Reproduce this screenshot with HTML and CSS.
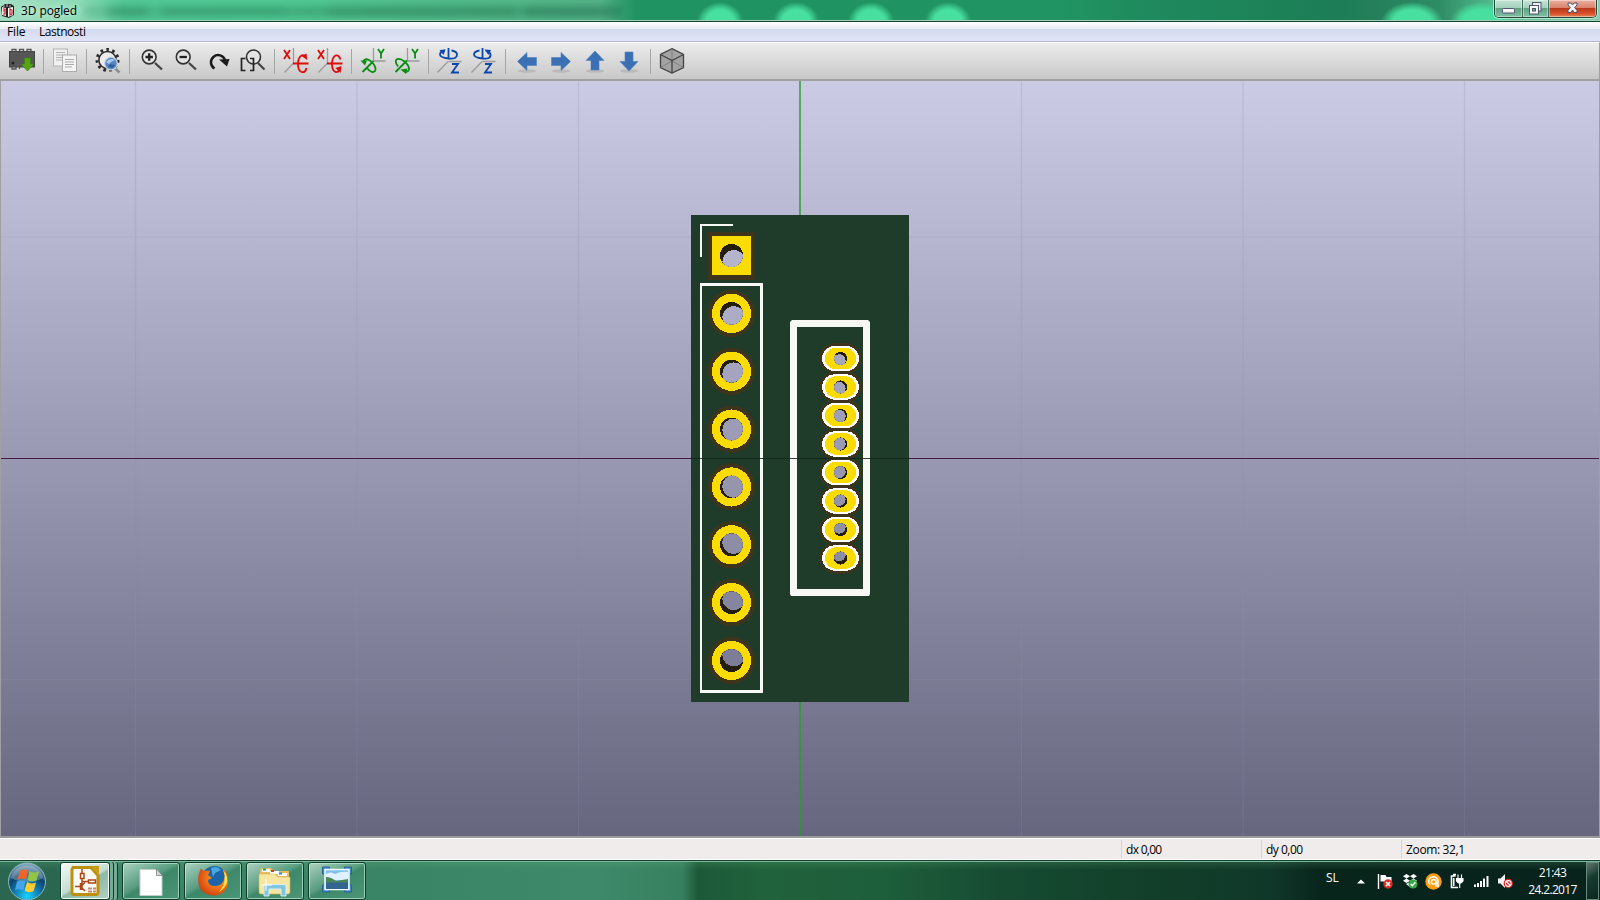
FILE: index.html
```html
<!DOCTYPE html>
<html lang="sl">
<head>
<meta charset="utf-8">
<title>3D pogled</title>
<link rel="stylesheet" href="styles.css">
</head>
<body>
<div class="window">
  <header class="titlebar">
    <div class="glow-row" aria-hidden="true"><i class="spot s1"></i><i class="spot s2"></i><i class="spot s3"></i><i class="spot s4"></i><i class="spot wide s5"></i><i class="spot wide s6"></i><i class="smear"></i></div>
    <svg class="app-icon" width="16" height="16" viewBox="0 0 16 16"><path d="M1 4 L5 1 L11 1 L14 3 V12 L9 15 L2 13Z" fill="#222"/><path d="M2 4l4 1v8l-4-1z" fill="#f4dede"/><path d="M8 5l5-1v8l-5 2z" fill="#fff"/><path d="M3 6h2v2h-2h2v3h-2M10 6l2 1v4l-2 1z" fill="none" stroke="#c8202a" stroke-width="1.2"/><path d="M4 2v2M7 1v3M10 2v2" stroke="#bbb"/></svg>
    <h1 class="title">3D pogled</h1>
    <div class="controls">
      <button class="ctl"><svg width="13" height="6" viewBox="0 0 13 6"><rect x=".5" y=".5" width="12" height="4.5" rx="1" fill="#f5f5f5" stroke="#50566b"/></svg></button>
      <button class="ctl"><svg width="13" height="13" viewBox="0 0 13 13"><rect x="3.5" y=".5" width="8.500" height="8.500" fill="#eee" stroke="#50566b"/><rect x=".5" y="3.500" width="9" height="8.500" fill="#f8f8f8" stroke="#50566b"/><rect x="3.500" y="6.500" width="3" height="2.500" fill="#74a993" stroke="#50566b"/></svg></button>
      <button class="ctl close"><svg width="13" height="12" viewBox="0 0 13 12"><path d="M2 1h3l1.500 2L8 1h3v2L8.700 5.500 11 8.500v2H8L6.500 8 5 10.500H2v-2l2.300-3L2 3z" fill="#f6f6f6" stroke="#54506a"/></svg></button>
    </div>
  </header>
  <nav class="menubar"><span class="menu-file">File</span><span class="menu-prefs">Lastnosti</span></nav>
  <div class="toolbar">
    <svg class="tool" viewBox="0 0 26 26"><path d="M3 4.500v-3h4v3M10.500 4.500v-3h4v3M18 4.500v-3h4v3M3 18v3h4v-3M10.500 18v3" fill="none" stroke="#555" stroke-width="1.300"/><rect x=".5" y="3.500" width="25" height="15.500" fill="#565656" stroke="#444"/><circle cx="4" cy="15" r="1.500" fill="#222"/><path d="M15.500 10h6v6h3.500l-6.500 7-6.500-7h3.500z" fill="#55a514" stroke="#397f0c" stroke-width=".7"/></svg>
    <i class="sep"></i>
    <svg class="tool" viewBox="0 0 26 26"><rect x="1.500" y="1" width="14" height="17" fill="#f0f0f0" stroke="#b4b4b4"/><path d="M4 4.500h9M4 7h9M4 9.500h8M4 12h7" stroke="#b4b4b4"/><rect x="10.500" y="7" width="14" height="16.500" fill="#f4f4f4" stroke="#acacac"/><path d="M13 11.500h9M13 14h9M13 16.500h9M13 19h7" stroke="#aaa"/></svg>
    <i class="sep"></i>
    <svg class="tool" viewBox="0 0 26 26"><circle cx="12.500" cy="12" r="10.500" fill="none" stroke="#2b2b2b" stroke-width="3" stroke-dasharray="2.600 3.400"/><circle cx="12.500" cy="12" r="8.600" fill="#ececec" stroke="#2b2b2b" stroke-width="1.500"/><path d="M19.500 20l5 4.500" stroke="#8d8d8d" stroke-width="2.600"/><circle cx="16" cy="15.500" r="6.300" fill="#5486c6" stroke="#cdd4df" stroke-width="1.200"/><path d="M11 14q4-5 9-2l-4 2-2 2z" fill="#a9cbf0"/><path d="M13 19l2-3 5 1-2 3z" fill="#2f5f9b"/></svg>
    <i class="sep"></i>
    <svg class="tool" viewBox="0 0 26 26"><path d="M17 15l7 6.500" stroke="#444" stroke-width="2.300"/><circle cx="11.200" cy="9" r="6.900" fill="#e4e4e4" stroke="#333" stroke-width="1.600"/><path d="M7.500 9h7.400M11.200 5.300v7.400" stroke="#222" stroke-width="2.300"/></svg>
    <svg class="tool" viewBox="0 0 26 26"><path d="M17 15l7 6.500" stroke="#444" stroke-width="2.300"/><circle cx="11.200" cy="9" r="6.900" fill="#e4e4e4" stroke="#333" stroke-width="1.600"/><path d="M7.500 9h7.400" stroke="#222" stroke-width="2.300"/></svg>
    <svg class="tool" viewBox="0 0 26 26"><path d="M8.500 20.500A7.200 7.200 0 1 1 19 12" fill="none" stroke="#1c1c1c" stroke-width="2.500"/><path d="M13 11.500l10.500-.5-2.500 7.500z" fill="#1c1c1c"/></svg>
    <svg class="tool" viewBox="0 0 26 26"><path d="M18 15l6.500 6.500" stroke="#444" stroke-width="2.200"/><circle cx="13.500" cy="9" r="7" fill="#e4e4e4" stroke="#333" stroke-width="1.600"/><path d="M5.500 10.500h-4v12h4M10 10.500h3.500v12H10" fill="none" stroke="#222" stroke-width="1.700"/></svg>
    <i class="sep"></i>
    <svg class="tool axis-x" viewBox="0 0 26 26"><path class="guide" d="M10.500 0v15.500M10.500 15L1.500 24.500"/><path d="M1 2l6 9M7 2L1 11M10 15.500h15.500M22.500 9Q20.500 6.500 18.500 7.500 15 9.500 15 16t3.500 8q4 1 5-4"/><path class="head" d="M18.500 8l5-2.500.7 6.500z"/></svg>
    <svg class="tool axis-x" viewBox="0 0 26 26"><path class="guide" d="M10.500 0v15.500M10.500 15L1.500 24.500"/><path d="M1 2l6 9M7 2L1 11M10 15.500h15.500M23.500 11.500q-1.500-5-5-4Q15 9.500 15 16t3.500 8q2.500.5 4-2"/><path class="head" d="M18.500 20l6-2-1 7z"/></svg>
    <i class="sep"></i>
    <svg class="tool axis-y" viewBox="0 0 26 26"><path class="guide" d="M13.500 0v13M13 13h12.500"/><path d="M18 1l3 4.500L24 1M21 5.500v5M2.500 24L13.500 13M3.500 13.500q1-3.500 5.500-1.500 5 3 6.500 8 .5 4.500-3.500 4-3-1-5-4"/><path class="head" d="M.5 12.500l6.500 0-2 5z"/></svg>
    <svg class="tool axis-y" viewBox="0 0 26 26"><path class="guide" d="M13.500 0v13M13 13h12.500"/><path d="M18 1l3 4.500L24 1M21 5.500v5M1.500 24L13 12.500M4 18.500Q.5 14 2.500 11.500q3-2 8 2 5 4.500 4.500 8-1 3-4 2"/><path class="head" d="M6.500 21.500l7-1-1.500 5.500z"/></svg>
    <i class="sep"></i>
    <svg class="tool axis-z" viewBox="0 0 26 26"><path class="guide" d="M11.500 13.500h13M11 13.500L.5 24.500"/><path d="M11.500 0v10.500M15 16h6l-6 8.500h7M8 2.500Q3 3.500 3 6.500t8.500 4 8.500-4Q20 3.500 14.500 2.500"/><path class="head" d="M2.500 2l6 -.5-2 5.500z"/></svg>
    <svg class="tool axis-z" viewBox="0 0 26 26"><path class="guide" d="M11.500 13.500h13M11 13.500L.5 24.500"/><path d="M11.500 0v10.500M14 16h6l-6 8.500h7M8.500 2.500Q3 3.500 3 6.500t8.500 4 8-4Q19 3.500 15 2.500"/><path class="head" d="M13.500 1.500l6.500.5-2.500 5z"/></svg>
    <i class="sep"></i>
    <svg class="tool arrow" viewBox="0 0 26 26"><ellipse cx="13" cy="23" rx="9" ry="1.800"/><path d="M3.500 13.500l9.500-9v5h9.500v8H13v5z"/></svg>
    <svg class="tool arrow" viewBox="0 0 26 26"><ellipse cx="13" cy="23" rx="9" ry="1.800"/><path d="M22.500 13.500l-9.500-9v5H3.500v8H13v5z"/></svg>
    <svg class="tool arrow" viewBox="0 0 26 26"><ellipse cx="13" cy="23" rx="9" ry="1.800"/><path d="M13 3l9 9.500h-5v9.500H9v-9.500H4z"/></svg>
    <svg class="tool arrow" viewBox="0 0 26 26"><ellipse cx="13" cy="23" rx="9" ry="1.800"/><path d="M13 23l9-9.500h-5V4H9v9.500H4z"/></svg>
    <i class="sep"></i>
    <svg class="tool" viewBox="0 0 26 26"><path d="M13 .7l11.500 5.800v13L13 25 1.500 19.500v-13z" fill="#a3a3a3" stroke="#444" stroke-width="1.300"/><path d="M13 .7V13M1.500 19.500L13 13l11.500 6.500" fill="none" stroke="#777" stroke-width=".8"/><path d="M1.500 6.500L13 12.500l11.500-6M13 12.500V25" fill="none" stroke="#444" stroke-width="1.300"/></svg>
  </div>
  <main class="viewport">
    <svg id="scene" class="scene" width="1598" height="755" viewBox="1 81 1598 755">
      <g class="grid"><path d="M135.500 81v755M357 81v755M578.500 81v755M1021.500 81v755M1243 81v755M1464.500 81v755M1 237h1598M1 679.500h1598"/></g>
      <path d="M800 81v755" stroke="#22a022" stroke-opacity=".72" stroke-width="2"/>
      <rect x="691" y="215" width="218" height="487" fill="#1f3b2a"/>
      <path d="M701 257V225h32" fill="none" stroke="#f8f9f5" stroke-width="2"/>
      <path d="M700 283h63v410h-63zM702 286v404h58V286z" fill="#f8f9f5" fill-rule="evenodd"/>
      <path d="M792 320h76l2 2v272l-1 2h-78l-1-2V322zM797 327v262h66V327z" fill="#f8f9f5" fill-rule="evenodd"/>
      <g id="pads" shape-rendering="crispEdges"></g>
      <path d="M1 458.500h690M909 458.500h690" stroke="#421a45"/>
      <path d="M691 458.500h218" stroke="#12261a" stroke-opacity=".85"/>
    </svg>
  </main>
  <footer class="statusbar"><span class="pane main-pane"></span><span class="pane dx">dx 0,00</span><span class="pane dy">dy 0,00</span><span class="pane last">Zoom: 32,1</span></footer>
</div>
<div class="taskbar">
  <svg class="orb" width="40" height="40" viewBox="0 0 40 40"><defs><radialGradient id="o" cx=".5" cy=".9" r=".9"><stop offset="0" stop-color="#19d5ff"/><stop offset=".35" stop-color="#1180b8"/><stop offset=".65" stop-color="#0c426c"/><stop offset="1" stop-color="#8fb4c2"/></radialGradient></defs><circle cx="20" cy="19.500" r="18.500" fill="url(#o)" stroke="#8bb9b6" stroke-width="1"/><path d="M4 16a16.500 16.500 0 0 1 32 0q-16 8-32 0z" fill="#fff" opacity=".25"/><path d="M13 9q4-2.500 8-.5l-2 9q-4-2-8.500 0z" fill="#f0642a"/><path d="M22.500 9q4 2.500 9.500.5l-2.500 9q-4.500 2-9-.5z" fill="#8fc648"/><path d="M10 19.500q4.500-2 8.500 0l-2.300 9q-4-2-8.200-.5z" fill="#45a5ea"/><path d="M20 20q4 2.500 9 .5L26.700 29q-4.500 2.500-9 -.2z" fill="#fecb31"/></svg>
  <div class="task-stack"><div class="task active"><svg width="32" height="32" viewBox="0 0 32 32"><path d="M4 2.500h18l7 8v17q0 2-2 2H5q-2 0-2-2V4.500z" fill="#fffdf8" stroke="#bd910d" stroke-width="3"/><path d="M22 1h8v8z" fill="#c69b12"/><path d="M13 4v4M13 14v11M11.500 8.500h3.500v5h-3.500zM13 16.500h6M19.500 15h7v3h-7zM6 21.500h5M11.500 18v7M12 21l4-3.500M12 22l4 4" fill="none" stroke="#ae4514" stroke-width="1.500"/><path d="M19 23.500h8M19 26.500h8" stroke="#c5896d" stroke-width="1.800" stroke-dasharray="4 1"/></svg></div><i></i><i></i></div>
  <div class="task"><svg width="32" height="32" viewBox="0 0 32 32"><path d="M5 4.500h17l5 6v20H5z" fill="#fff" stroke="#c6ccc9"/><path d="M21.500 4v6.500h6z" fill="#d2d6d4" stroke="#6a716d" stroke-width=".7"/></svg></div>
  <div class="task"><svg width="32" height="32" viewBox="0 0 32 32"><defs><radialGradient id="fox" cx=".65" cy=".35" r=".8"><stop offset="0" stop-color="#ffb61a"/><stop offset=".5" stop-color="#ef6e17"/><stop offset="1" stop-color="#c3350e"/></radialGradient></defs><circle cx="17.500" cy="14" r="13" fill="#1d65a8"/><path d="M14 3q6-3 10 2l-6 3-2 4z" fill="#4aa8dd"/><path d="M2.500 7L4 3.500 7 6q3-1 6 0l-2 4 4 3-4 2q0 6 7 6 8 0 10-9 0-5-3-9 6 4 6 12 0 15-14.500 15.500Q1 29 1.200 15 1 10 2.500 7z" fill="url(#fox)"/><path d="M26 5q6 7 3.500 14-3 6-8 8 6-6 6-12 1-5-1.500-10z" fill="#ffe248"/></svg></div>
  <div class="task"><svg width="34" height="32" viewBox="0 0 34 32"><path d="M2 6q0-3 2-3h9l3 3h15v23H2z" fill="#e5bc5e"/><path d="M4 4h8v3H4zM12 6h9v3h-9zM20 8h9v3h-9z" fill="#fff"/><path d="M5 3.500h3v2H5z" fill="#18a837"/><path d="M13 5h3v2h-3z" fill="#e3371f"/><path d="M21 7.500h3v2h-3z" fill="#278fd5"/><path d="M1 9h16l3 3h12v15q0 2-2 2H3q-2 0-2-2z" fill="#f7e6a0" stroke="#d8b45b" stroke-width=".6"/><path d="M6 31V21q0-1.500 2-1.500h18q2 0 2 1.500v10h-5v-7H11v7z" fill="#83c4de" stroke="#d4f0f7"/><path d="M8 14v12M3 20h11" stroke="#fff"/></svg></div>
  <div class="task"><svg width="32" height="32" viewBox="0 0 32 32"><path d="M1.500 2h7v7h-7zM23.500 2h7v7h-7zM1.500 20h7v7h-7zM23.500 20h7v7h-7z" fill="#4488ca" stroke="#276399"/><rect x="4" y="4.500" width="24" height="20" fill="#7fc0f0" stroke="#f5fbff" stroke-width="1.500"/><path d="M5 9q5-3 9 0 6-3 13-2v8H5z" fill="#e0f2ff"/><path d="M5 12q5 0 10 4 6-1 12-2v4H5z" fill="#4a8559"/><path d="M5 17.500h22V24H5z" fill="#326590"/></svg></div>
  <div class="tray">
    <span class="lang">SL</span>
    <svg class="t-up" width="8" height="5" viewBox="0 0 8 5"><path d="M0 4.500L4 .5l4 4z" fill="#fff"/></svg>
    <svg class="t-flag" width="16" height="16" viewBox="0 0 16 16"><path d="M1.500 1v15" stroke="#fff" stroke-width="1.400"/><path d="M3.500 2h5l1 2h5v6H8L7 8.500H3.500z" fill="#fff"/><circle cx="11" cy="11" r="4.700" fill="#db2b27"/><path d="M9 9l4 4M13 9l-4 4" stroke="#fff" stroke-width="1.600"/></svg>
    <svg class="t-drop" width="16" height="16" viewBox="0 0 16 16"><path d="M4.500 1L8 3.300 4.500 5.500 1 3.300zM11.500 1L15 3.300l-3.500 2.200L8 3.300zM4.500 5.500L8 7.800 4.500 10 1 7.800zM11.500 5.500L15 7.800 11.500 10 8 7.800zM4 11l4-2 4 2-4 3z" fill="#fff"/><circle cx="11" cy="11" r="4.500" fill="#3aa747"/><path d="M8.700 11l1.700 1.800 3-3.600" fill="none" stroke="#fff" stroke-width="1.400"/></svg>
    <svg class="t-avast" width="17" height="17" viewBox="0 0 17 17"><circle cx="8.500" cy="8.500" r="8.200" fill="#ff9e12"/><path d="M5.300 12A4.700 4.700 0 1 1 13 8.500V13h-2V8.500" fill="none" stroke="#fff" stroke-width="1.500"/><circle cx="8.700" cy="8.800" r="2.300" fill="none" stroke="#fff" stroke-width="1.400"/></svg>
    <svg class="t-batt" width="14" height="16" viewBox="0 0 14 16"><path d="M5.500 3H1.500v11.500H8M3 1.500h3" fill="none" stroke="#fff" stroke-width="1.600"/><path d="M3 5h1.500v8H3z" fill="#fff"/><path d="M8 1.500v4M11.500 1.500v4M6.500 5.500h6.500v2.500l-2 2H8.500l-2-2zM9.700 10v5" fill="#fff" stroke="#fff" stroke-width="1.100"/></svg>
    <svg class="t-sig" width="15" height="12" viewBox="0 0 15 12"><path d="M0 9.500h2V12H0zM3 8h2v4H3zM6 6h2v6H6zM9 3.500h2V12H9zM12.500 1h2v11h-2z" fill="#fff"/></svg>
    <svg class="t-vol" width="16" height="16" viewBox="0 0 16 16"><path d="M0 5.500h2.500L7 1v14l-4.500-4.500H0z" fill="#f3f3f3"/><circle cx="10.300" cy="10.500" r="4.700" fill="#d92424"/><circle cx="10.300" cy="10.500" r="2.900" fill="none" stroke="#fff" stroke-width="1.100"/><path d="M8.300 8.500l4 4" stroke="#fff" stroke-width="1.100"/></svg>
    <div class="clock"><span>21:43</span><span class="date">24.2.2017</span></div>
    <i class="show-desktop"></i>
  </div>
</div>
<script src="scene.js"></script>
</body>
</html>
```

FILE: styles.css
```css
* { box-sizing: border-box; }
body { margin: 0; width: 1600px; height: 900px; overflow: hidden; font-family: "Open Sans", "Noto Sans", sans-serif; font-size: 12px; color: #000; background: #f0eceb; }
.window { height: 860px; display: flex; flex-direction: column; }
.titlebar { position: relative; height: 22px; flex: none; display: flex; align-items: flex-start; overflow: hidden; border-bottom: 1px solid #12472f; box-shadow: inset 0 -1px #a3cdb9;
  background: linear-gradient(90deg, #a3dfc3 0, #8bdab5 80px, #52c896 125px, #4fc994 280px, #50be8c 400px, #53b287 600px, #209363 635px, #219463 1060px, #1f8a5d 1150px, #1c7d56 1340px, #24805a 1375px, #2f8c65 1440px, #4fb98c 1490px, #8ccdb1 1600px); }
.glow-row { position: absolute; inset: 0 0 1px 0; overflow: hidden; }
.spot { position: absolute; top: 2px; width: 46px; height: 40px; border-radius: 50%; background: radial-gradient(closest-side, #48e0a0 60%, rgba(72,224,160,.7) 74%, transparent); }
.wide { width: 62px; }
.s1 { left: 697px; } .s2 { left: 773px; } .s3 { left: 848px; } .s4 { left: 925px; } .s5 { left: 1381px; } .s6 { left: 1450px; }
.smear { position: absolute; left: 84px; top: 6px; width: 538px; height: 11px; filter: blur(3px); background: linear-gradient(90deg, rgba(20,90,60,.15) 0 20px, rgba(20,90,60,.32) 28px 60px, rgba(20,90,60,.15) 68px 74px, rgba(20,90,60,.3) 82px 196px, rgba(20,90,60,.24) 205px 240px, rgba(20,90,60,.34) 248px 428px, rgba(20,90,60,.2) 436px, rgba(20,90,60,.4) 444px 512px, rgba(20,90,60,.28) 538px); }
.app-icon { position: relative; margin: 3px 0 0; }
.title { position: relative; margin: 2px 0 0 5px; font-size: 12px; line-height: 17px; font-weight: 400; letter-spacing: -.1px; text-shadow: 0 0 6px #fff; }
.controls { position: relative; margin-left: auto; margin-right: 3px; display: flex; height: 18px; border: 1px solid #24453a; border-top: 0; border-radius: 0 0 5px 5px; box-shadow: 0 0 0 1px rgba(225,255,240,.6); overflow: hidden; }
.ctl { width: 26px; padding: 0; border: 0; border-right: 1px solid #3f6d5c; display: flex; align-items: center; justify-content: center; box-shadow: inset 0 0 0 1px rgba(255,255,255,.4); background: linear-gradient(#c4e4d6 0, #a2cfbb 45%, #62a184 50%, #80c0a4 100%); }
.ctl:first-child { padding-top: 4px; width: 28px; }
.ctl.close { width: 47px; padding-bottom: 1px; border-right: 0; background: linear-gradient(#eab0a0 0, #d98570 44%, #b93a1c 50%, #d9502a 80%, #e08858 100%); }
.menubar { height: 20px; flex: none; display: flex; padding: 0 7px; line-height: 20px; border-bottom: 1px solid #b0b6cd; background: linear-gradient(#fff 0, #e8ecf5 7px, #d5dbee 7px, #dfe4f6 100%); }
.menu-file { width: 32px; letter-spacing: -.15px; }
.menu-prefs { letter-spacing: -.45px; }
.toolbar { height: 39px; flex: none; display: flex; align-items: center; gap: 8px; padding: 0 0 0 9px; border-top: 1px solid #fff; border-bottom: 2px solid #a0a0a0; border-right: 1px solid #a0a0a0; background: linear-gradient(#ececec, #c8c8c8); }
.tool { width: 26px; height: 26px; flex: none; }
.sep { width: 1px; height: 25px; background: #a5a5a5; flex: none; }
.axis-x path, .axis-y path, .axis-z path { fill: none; stroke-width: 1.800; }
.axis-x path { stroke: #e00b0b; } .axis-x .head { fill: #e00b0b; stroke: none; }
.axis-y path { stroke: #078e10; } .axis-y .head { fill: #078e10; stroke: none; }
.axis-z path { stroke: #0b46ae; } .axis-z .head { fill: #0b46ae; stroke: none; }
.tool .guide { stroke: #9b9b9b; stroke-width: 1.300; }
.arrow path { fill: #3b70b4; stroke: #4e81bd; stroke-width: .6; }
.arrow ellipse { fill: #777; opacity: .25; }
.viewport { height: 755px; flex: none; border-left: 1px solid #a0a0a0; border-right: 1px solid #a0a0a0; background: linear-gradient(#cbcbe5, #66667f); }
.scene { display: block; }
.grid { fill: none; stroke: #9090aa; stroke-opacity: .24; stroke-width: 1.200; }
.statusbar { height: 24px; flex: none; display: flex; padding: 2px 0 1px; border-top: 2px solid #999; border-bottom: 1px solid #fff; background: #f0eceb; box-shadow: inset 0 1px #fff; }
.pane { width: 140px; padding-left: 4px; line-height: 20px; border-left: 1px solid #d5d2d0; letter-spacing: -.35px; }
.dx { letter-spacing: -.7px; }
.dy { letter-spacing: -.5px; }
.main-pane { width: 1121px; border-left: 0; }
.last { width: 199px; }
.taskbar { height: 40px; display: flex; align-items: flex-start; padding: 1px 0 0 7px; border-top: 1px solid #173f2d; box-shadow: inset 0 1px #78b79b;
  background: linear-gradient(rgba(110,180,120,.22), transparent 9px), linear-gradient(90deg, #2a6650 0, #2a6650 55px, #398467 125px, #3a8566 400px, #3d8969 600px, #37805f 682px, #1c5939 698px, #20623b 760px, #1e5f3b 880px, #164b32 1000px, #123f29 1150px, #10382a 1270px, #08251c 1320px, #07221b 1600px); }
.orb { margin-right: 13px; }
.task { width: 58px; height: 38px; margin-right: 4px; flex: none; display: flex; align-items: center; justify-content: center; border: 1px solid #123b2b; border-radius: 3px; box-shadow: inset 0 0 0 1px rgba(200,240,220,.65); background: linear-gradient(150deg, rgba(230,250,240,.65), rgba(160,210,190,.3) 45%, rgba(80,160,120,.15) 52%, rgba(120,190,160,.3)); }
.task-stack { display: flex; margin-right: 3.7px; }
.task-stack i { width: 4px; height: 38px; border-right: 1px solid #123b2b; background: #76ac96; border-radius: 0 3px 3px 0; }
.task.active { width: 50px; margin-right: 0; background: linear-gradient(150deg, #f4faf7, #c4dcd2 50%, #8fb9a8 55%, #b0d0c4); box-shadow: inset 0 0 0 1px #effaf5; }
.tray { margin-left: auto; display: flex; align-items: center; height: 38px; color: #fff; flex: none; }
.lang { width: 31px; margin-top: -7px; font-size: 12px; }
.t-up { margin-right: 12px; } .t-flag { margin-right: 9px; } .t-drop { margin-right: 7px; } .t-avast { margin-right: 8px; } .t-batt { margin-right: 10px; } .t-sig { margin-right: 9px; } .t-vol { margin-right: 10px; }
.clock { width: 57px; margin-right: 5px; display: flex; flex-direction: column; align-items: center; line-height: 17px; letter-spacing: -.6px; }
.date { letter-spacing: -.65px; white-space: nowrap; }
.show-desktop { width: 13px; height: 38px; margin-right: 1px; border: 1px solid #67877c; background: linear-gradient(145deg, #62796f, #183b30 40%, #0b251d); }
```

FILE: scene.js
```js
const NS = "http://www.w3.org/2000/svg";
const pads = document.getElementById("pads");

function add(tag, attrs, parent = pads) {
  const el = document.createElementNS(NS, tag);
  for (const key in attrs) el.setAttribute(key, attrs[key]);
  parent.appendChild(el);
  return el;
}

// Background gradient sampled at a given height of the viewport
function backdrop(y) {
  const t = (y - 81) / 755;
  return `rgb(${[203, 203, 229].map((c, i) => Math.round(c + ([102, 102, 127][i] - c) * t)).join()})`;
}

// A drilled hole: dark barrel wall with the far opening offset by perspective
function hole(id, cx, cy, r, dx, dy) {
  const clip = add("clipPath", { id });
  add("circle", { cx, cy, r }, clip);
  add("circle", { cx, cy, r, fill: "#241e08" });
  add("circle", { cx: cx + dx, cy: cy + dy, r: r - 0.1, fill: backdrop(cy), "clip-path": `url(#${id})` });
}

for (let i = 0; i < 8; i++) {
  const cx = 731.5, cy = 255.5 + i * 57.86;
  if (i === 0) {
    add("rect", { x: 708, y: 232, width: 47, height: 48, fill: "#3e331b" });
    add("rect", { x: 712, y: 236, width: 39, height: 39, fill: "#fadc00" });
  } else {
    add("circle", { cx, cy, r: 23.6, fill: "#3e331b" });
    add("circle", { cx, cy, r: 19.6, fill: "#fadc00" });
  }
  hole("d" + i, cx, cy, 11.5, 2.3, 6 - i * 1.67);
}

const slots = Array.from({ length: 8 }, (_, i) => 358.5 + i * 28.5);
const slot = (cy, w, h, rx, fill) => add("rect", { x: 840.5 - w / 2, y: cy - h / 2, width: w, height: h, rx, ry: h / 2, fill });
slots.forEach(cy => slot(cy, 42, 31, 16, "#3e331b"));
slots.forEach((cy, i) => {
  slot(cy, 37, 25.4, 13, "#ffffff");
  slot(cy, 31, 21.4, 11, "#fadc00");
  hole("s" + i, 840.5, cy, 6.6, -1.3, 2.2 - i * 0.75);
});
```
